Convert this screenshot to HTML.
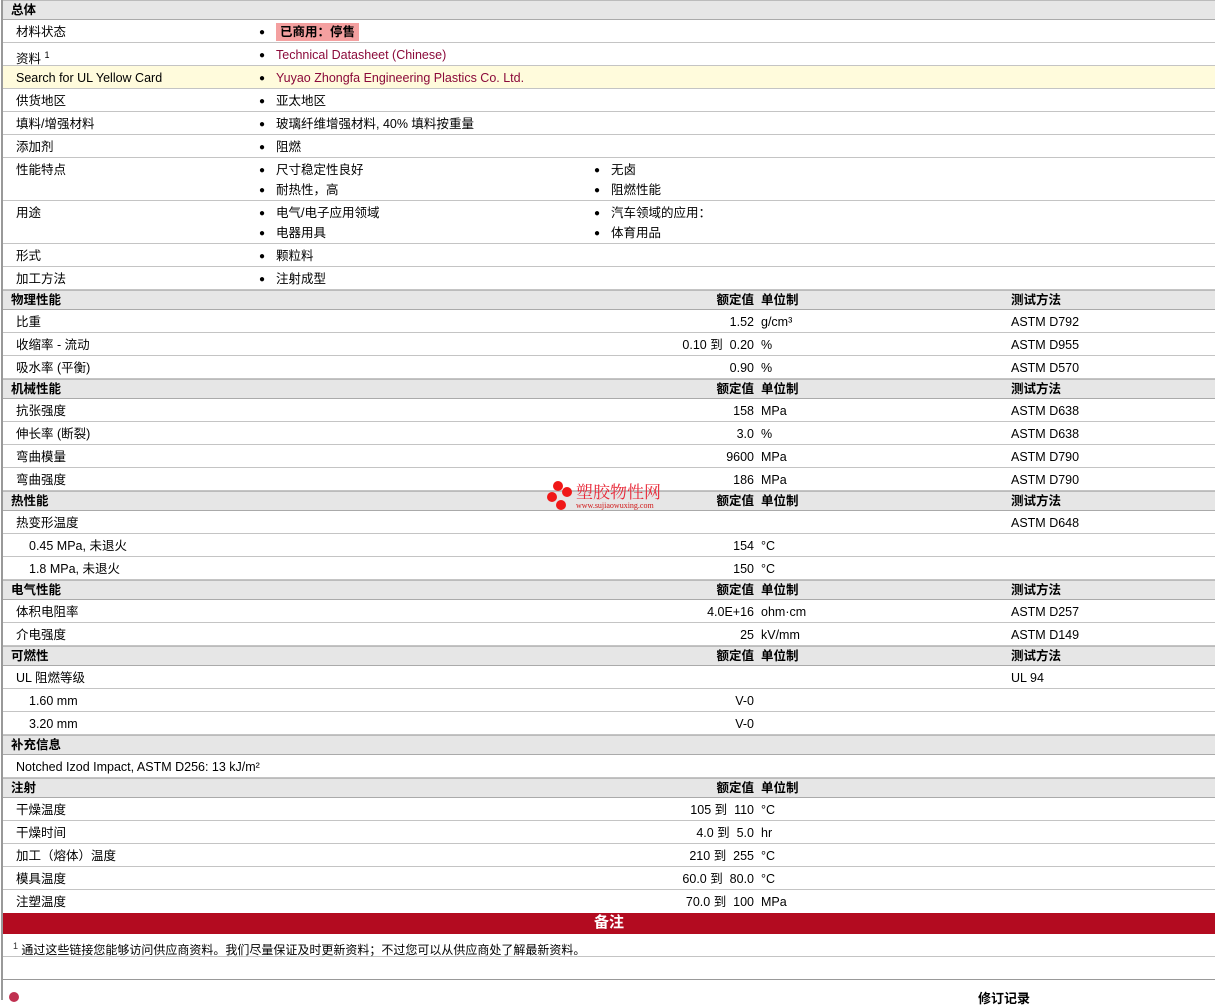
<!DOCTYPE html>
<html><head><meta charset="utf-8"><style>
*{box-sizing:border-box;margin:0;padding:0}
body{width:1215px;height:994px;overflow:hidden;background:#fff;font-family:"Liberation Sans","Noto Sans CJK SC",sans-serif;font-size:12.5px;color:#000;position:relative}
#wrap{position:absolute;left:1px;top:0;width:1214px;border-left:2px solid #999;}
.r{position:relative;height:23px;border-bottom:1px solid #c4c4c4;background:#fff}
.r span,.h span{position:absolute;white-space:nowrap;line-height:24px;top:0}
.d{height:43px}
.h{position:relative;height:20px;background:#e6e6e6;border-bottom:1px solid #aaa;border-top:1px solid #bbb;font-weight:bold}
.h span{line-height:18px}
.y{background:#fffbdc}
.l{left:13px}.l2{left:26px}
.b{left:256px}.v{left:273px}.b2{left:591px}.v2{left:608px}
.n{right:461px;text-align:right}.u{left:758px}.t{left:1008px}
.hv{right:461px}.hu{left:758px}
.lk{color:#8b0a3a}
.bul::before{content:"●";font-size:10px;position:relative;top:-1px}
.red{height:21px;background:#b30b20;color:#fff;text-align:center;font-weight:bold;font-size:15px;line-height:20px}
</style></head><body>
<div id="wrap">
<div class="h"><span class="l" style="left:8px">总体</span></div>
<div class="r"><span class="l">材料状态</span><span class="b bul"></span><span class="v" style="top:3px;line-height:18px;background:#f4a0a0;font-weight:bold;padding:0 4px">已商用：停售</span></div>
<div class="r"><span class="l">资料 <sup style="font-size:9px">1</sup></span><span class="b bul"></span><span class="v lk">Technical Datasheet (Chinese)</span></div>
<div class="r y"><span class="l">Search for UL Yellow Card</span><span class="b bul"></span><span class="v lk">Yuyao Zhongfa Engineering Plastics Co. Ltd.</span></div>
<div class="r"><span class="l">供货地区</span><span class="b bul"></span><span class="v">亚太地区</span></div>
<div class="r"><span class="l">填料/增强材料</span><span class="b bul"></span><span class="v">玻璃纤维增强材料, 40% 填料按重量</span></div>
<div class="r"><span class="l">添加剂</span><span class="b bul"></span><span class="v">阻燃</span></div>
<div class="r d"><span class="l">性能特点</span><span class="b bul"></span><span class="v">尺寸稳定性良好</span><span class="b2 bul"></span><span class="v2">无卤</span><span class="b bul" style="top:20px"></span><span class="v" style="top:20px">耐热性，高</span><span class="b2 bul" style="top:20px"></span><span class="v2" style="top:20px">阻燃性能</span></div>
<div class="r d"><span class="l">用途</span><span class="b bul"></span><span class="v">电气/电子应用领域</span><span class="b2 bul"></span><span class="v2">汽车领域的应用：</span><span class="b bul" style="top:20px"></span><span class="v" style="top:20px">电器用具</span><span class="b2 bul" style="top:20px"></span><span class="v2" style="top:20px">体育用品</span></div>
<div class="r"><span class="l">形式</span><span class="b bul"></span><span class="v">颗粒料</span></div>
<div class="r"><span class="l">加工方法</span><span class="b bul"></span><span class="v">注射成型</span></div>
<div class="h"><span style="left:8px">物理性能</span><span class="hv">额定值</span><span class="hu">单位制</span><span class="t">测试方法</span></div>
<div class="r"><span class="l">比重</span><span class="n">1.52</span><span class="u">g/cm³</span><span class="t">ASTM D792</span></div>
<div class="r"><span class="l">收缩率 - 流动</span><span class="n">0.10 到&nbsp; 0.20</span><span class="u">%</span><span class="t">ASTM D955</span></div>
<div class="r"><span class="l">吸水率 (平衡)</span><span class="n">0.90</span><span class="u">%</span><span class="t">ASTM D570</span></div>
<div class="h"><span style="left:8px">机械性能</span><span class="hv">额定值</span><span class="hu">单位制</span><span class="t">测试方法</span></div>
<div class="r"><span class="l">抗张强度</span><span class="n">158</span><span class="u">MPa</span><span class="t">ASTM D638</span></div>
<div class="r"><span class="l">伸长率 (断裂)</span><span class="n">3.0</span><span class="u">%</span><span class="t">ASTM D638</span></div>
<div class="r"><span class="l">弯曲模量</span><span class="n">9600</span><span class="u">MPa</span><span class="t">ASTM D790</span></div>
<div class="r"><span class="l">弯曲强度</span><span class="n">186</span><span class="u">MPa</span><span class="t">ASTM D790</span></div>
<div class="h"><span style="left:8px">热性能</span><span class="hv">额定值</span><span class="hu">单位制</span><span class="t">测试方法</span></div>
<div class="r"><span class="l">热变形温度</span><span class="t">ASTM D648</span></div>
<div class="r"><span class="l2">0.45 MPa, 未退火</span><span class="n">154</span><span class="u">°C</span></div>
<div class="r"><span class="l2">1.8 MPa, 未退火</span><span class="n">150</span><span class="u">°C</span></div>
<div class="h"><span style="left:8px">电气性能</span><span class="hv">额定值</span><span class="hu">单位制</span><span class="t">测试方法</span></div>
<div class="r"><span class="l">体积电阻率</span><span class="n">4.0E+16</span><span class="u">ohm·cm</span><span class="t">ASTM D257</span></div>
<div class="r"><span class="l">介电强度</span><span class="n">25</span><span class="u">kV/mm</span><span class="t">ASTM D149</span></div>
<div class="h"><span style="left:8px">可燃性</span><span class="hv">额定值</span><span class="hu">单位制</span><span class="t">测试方法</span></div>
<div class="r"><span class="l">UL 阻燃等级</span><span class="t">UL 94</span></div>
<div class="r"><span class="l2">1.60 mm</span><span class="n">V-0</span></div>
<div class="r"><span class="l2">3.20 mm</span><span class="n">V-0</span></div>
<div class="h"><span style="left:8px">补充信息</span></div>
<div class="r"><span class="l">Notched Izod Impact, ASTM D256: 13 kJ/m²</span></div>
<div class="h"><span style="left:8px">注射</span><span class="hv">额定值</span><span class="hu">单位制</span></div>
<div class="r"><span class="l">干燥温度</span><span class="n">105 到&nbsp; 110</span><span class="u">°C</span></div>
<div class="r"><span class="l">干燥时间</span><span class="n">4.0 到&nbsp; 5.0</span><span class="u">hr</span></div>
<div class="r"><span class="l">加工（熔体）温度</span><span class="n">210 到&nbsp; 255</span><span class="u">°C</span></div>
<div class="r"><span class="l">模具温度</span><span class="n">60.0 到&nbsp; 80.0</span><span class="u">°C</span></div>
<div class="r" style="border-bottom:none"><span class="l">注塑温度</span><span class="n">70.0 到&nbsp; 100</span><span class="u">MPa</span></div>
<div class="red">备注</div>
<div class="r"><span style="left:10px;font-size:12px"><sup style="font-size:9px;color:#333">1</sup> 通过这些链接您能够访问供应商资料。我们尽量保证及时更新资料；不过您可以从供应商处了解最新资料。</span></div>
<div class="r" style="height:23px;border-bottom:1px solid #999"></div>
<div style="position:relative;height:20px"><span style="position:absolute;left:6px;top:12px;width:10px;height:10px;border-radius:5px;background:#c03050"></span><span style="position:absolute;left:975px;top:8px;font-weight:bold;font-size:13px">修订记录</span></div>
</div>
<div style="position:absolute;left:545px;top:479px;width:130px;height:36px">
<div style="position:absolute;left:8px;top:2px;width:10px;height:10px;border-radius:50%;background:#f01818"></div>
<div style="position:absolute;left:17px;top:8px;width:10px;height:10px;border-radius:50%;background:#f01818"></div>
<div style="position:absolute;left:2px;top:13px;width:10px;height:10px;border-radius:50%;background:#f01818"></div>
<div style="position:absolute;left:11px;top:21px;width:10px;height:10px;border-radius:50%;background:#f01818"></div>
<div style="position:absolute;left:31px;top:3px;color:#e82838;font-size:17px;line-height:18px;font-family:'Noto Serif CJK SC',serif">塑胶物性网</div>
<div style="position:absolute;left:31px;top:22px;color:#d01818;font-size:8px;font-family:'Liberation Serif',serif">www.sujiaowuxing.com</div>
</div>
</body></html>
